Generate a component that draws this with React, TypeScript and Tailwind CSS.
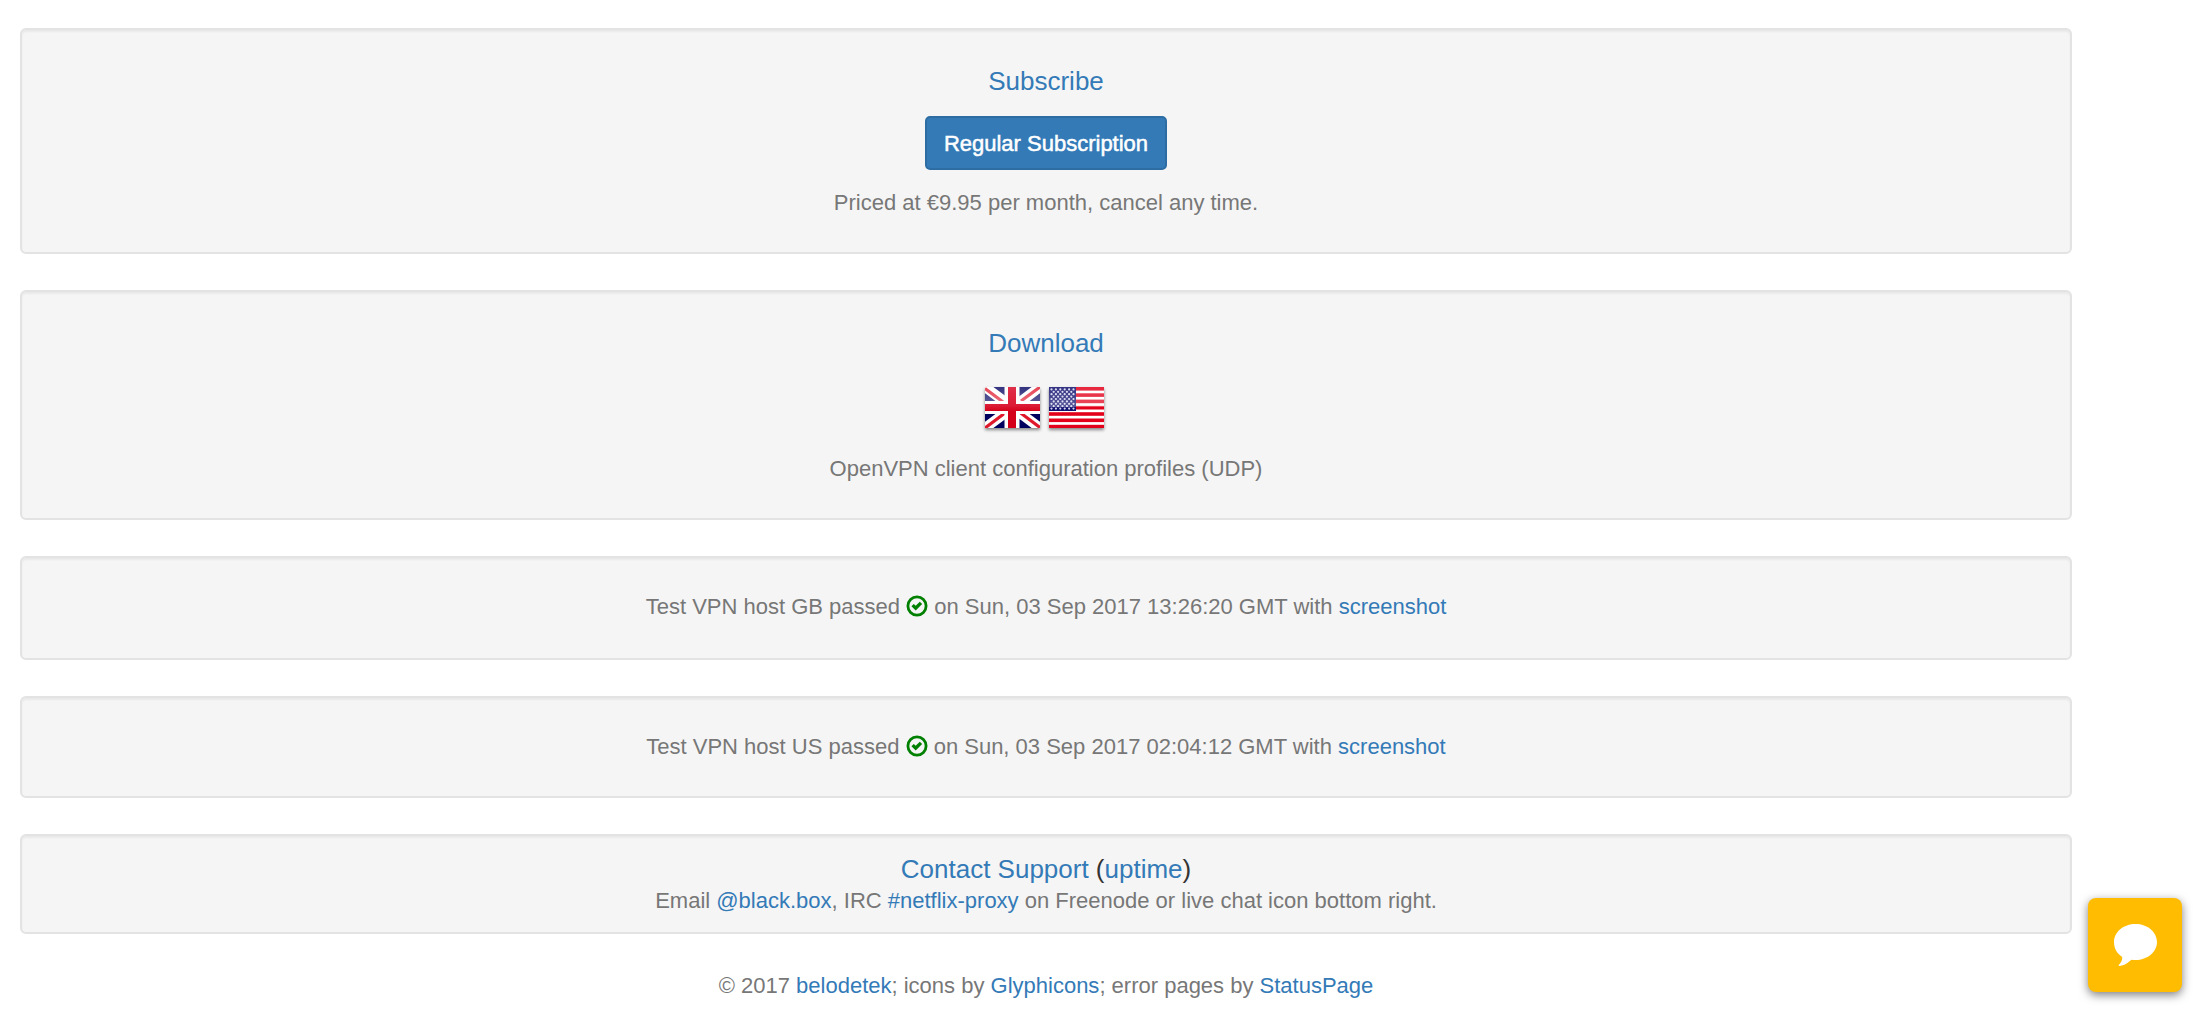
import type { ReactNode } from "react";

function Well({ className, children }: { className: string; children: ReactNode }) {
  return (
    <section
      className={`rounded-md border-2 border-[#e3e3e3] bg-[#f5f5f5] text-center shadow-[inset_0_2px_2px_rgba(0,0,0,0.05)] ${className}`}
    >
      {children}
    </section>
  );
}

function Link({ children }: { children: ReactNode }) {
  return (
    <a href="#" className="text-[#337ab7] hover:underline">
      {children}
    </a>
  );
}

function CheckIcon() {
  return (
    <svg viewBox="0 0 22 22" className="inline-block size-[22px] align-[-3px]" role="img" aria-label="OK">
      <circle cx="11" cy="11" r="9.1" fill="none" stroke="#008000" strokeWidth="2.8" />
      <path d="M5.400 11.300 7.800 8.900 9.700 10.800 13.800 6.700 16.200 9.100 9.700 15.600Z" fill="#008000" />
    </svg>
  );
}

function FlagGB() {
  return (
    <svg viewBox="0 0 55 41" className="h-[41px] w-[55px] shadow-[0_2px_3px_rgba(0,0,0,0.45)]" role="img" aria-label="United Kingdom">
      <defs>
        <linearGradient id="gloss-gb" x1="0" y1="0" x2="0" y2="1">
          <stop offset="0" stopColor="#fff" stopOpacity="0.2" />
          <stop offset="1" stopColor="#fff" stopOpacity="0.4" />
        </linearGradient>
        <linearGradient id="cross-gb" x1="0" y1="0" x2="0" y2="1">
          <stop offset="0" stopColor="#e0304a" />
          <stop offset="0.45" stopColor="#dc1c36" />
          <stop offset="0.6" stopColor="#d4001a" />
        </linearGradient>
      </defs>
      <rect width="55" height="41" fill="#00005f" />
      <path d="M0 0 55 41M55 0 0 41" stroke="#fff" strokeWidth="10" />
      <path d="M0 1.500 18 15M55 0 36 14M0 41 20 26M55 40.500 35 25.500" stroke="#e0182c" strokeWidth="3.2" />
      <rect width="55" height="20" fill="url(#gloss-gb)" />
      <path d="M19.500 0h15v14H55v13H34.500v14h-15V27H0V14h19.500Z" fill="#fff" />
      <path d="M23 0h8v17H55v7H31v17h-8V24H0v-7h23Z" fill="url(#cross-gb)" />
    </svg>
  );
}

const stripes = [0, 1, 2, 3, 4, 5, 6];
const starRows = [0, 1, 2, 3, 4, 5, 6, 7, 8];

function FlagUS() {
  return (
    <svg viewBox="0 0 55 41" className="h-[41px] w-[55px] shadow-[0_2px_3px_rgba(0,0,0,0.45)]" role="img" aria-label="United States">
      <defs>
        <linearGradient id="gloss-us" x1="0" y1="0" x2="0" y2="1">
          <stop offset="0" stopColor="#fff" stopOpacity="0.15" />
          <stop offset="1" stopColor="#fff" stopOpacity="0.3" />
        </linearGradient>
      </defs>
      <rect width="55" height="41" fill="#fff" />
      {stripes.map((i) => (
        <rect key={i} y={i * 6.3} width="55" height="3.6" fill="#e3001b" />
      ))}
      <rect width="27" height="24" fill="#10106e" />
      {starRows.map((r) =>
        (r % 2 ? [0, 1, 2, 3, 4] : [0, 1, 2, 3, 4, 5]).map((c) => (
          <circle key={`${r}-${c}`} cx={2.5 + (r % 2 ? 2.2 : 0) + c * 4.4} cy={2.4 + r * 2.4} r="1.1" fill="#d5d5ee" />
        )),
      )}
      <rect width="55" height="20" fill="url(#gloss-us)" />
    </svg>
  );
}

export default function App() {
  return (
    <div className="bg-white font-['Liberation_Sans',Arial,sans-serif] text-[22px] leading-[34px] text-[#777]">
      <main className="mr-[132px] ml-5 flex flex-col gap-9 pt-7">
        <Well className="pt-[34px] pb-8">
          <h3 className="text-[26px]">
            <Link>Subscribe</Link>
          </h3>
          <button
            type="button"
            className="mx-auto mt-[18px] mb-4 block h-[54px] w-fit rounded-[5px] border-2 border-[#2e6da4] bg-[#337ab7] px-[17px] pt-0.5 text-white [-webkit-text-stroke:0.5px_white]"
          >
            Regular Subscription
          </button>
          <p>Priced at €9.95 per month, cancel any time.</p>
        </Well>

        <Well className="pt-[34px] pb-8">
          <h3 className="text-[26px]">
            <Link>Download</Link>
          </h3>
          <div className="mt-[27px] mb-6 flex justify-center">
            <a href="#" className="w-16 pl-[3px]">
              <FlagGB />
            </a>
            <a href="#" className="w-16 pl-[3px]">
              <FlagUS />
            </a>
          </div>
          <p>OpenVPN client configuration profiles (UDP)</p>
        </Well>

        <Well className="pt-8 pb-[34px]">
          <p>
            Test VPN host GB passed <CheckIcon /> on Sun, 03 Sep 2017 13:26:20 GMT with <Link>screenshot</Link>
          </p>
        </Well>

        <Well className="py-8">
          <p>
            Test VPN host US passed <CheckIcon /> on Sun, 03 Sep 2017 02:04:12 GMT with <Link>screenshot</Link>
          </p>
        </Well>

        <Well className="pt-[17px] pb-[15px] leading-8">
          <h3 className="text-[26px] text-[#333]">
            <Link>Contact Support</Link> (<Link>uptime</Link>)
          </h3>
          <p>
            Email <Link>@black.box</Link>, IRC <Link>#netflix-proxy</Link> on Freenode or live chat icon bottom right.
          </p>
        </Well>

        <footer className="text-center leading-8">
          © 2017 <Link>belodetek</Link>; icons by <Link>Glyphicons</Link>; error pages by <Link>StatusPage</Link>
        </footer>
      </main>

      <button
        type="button"
        aria-label="Open live chat"
        className="fixed right-[22px] bottom-8 flex size-[94px] items-center justify-center rounded-lg bg-[#ffbc00] shadow-[0_3px_10px_rgba(0,0,0,0.5)]"
      >
        <svg viewBox="0 0 44 44" className="size-11" fill="#fff" aria-hidden="true">
          <path d="M22.5 1C34.5 1 44 9 44 19S34.500 37 22.500 37C21 37 19.800 37 18.500 36.800C15 39.500 11.500 43 6 43C5.200 43 5.500 42.300 6 41.800C8 39.500 9.500 37.500 9.200 34C4 30.500 1 25.500 1 19C1 9 10.500 1 22.500 1Z" />
        </svg>
      </button>
    </div>
  );
}
